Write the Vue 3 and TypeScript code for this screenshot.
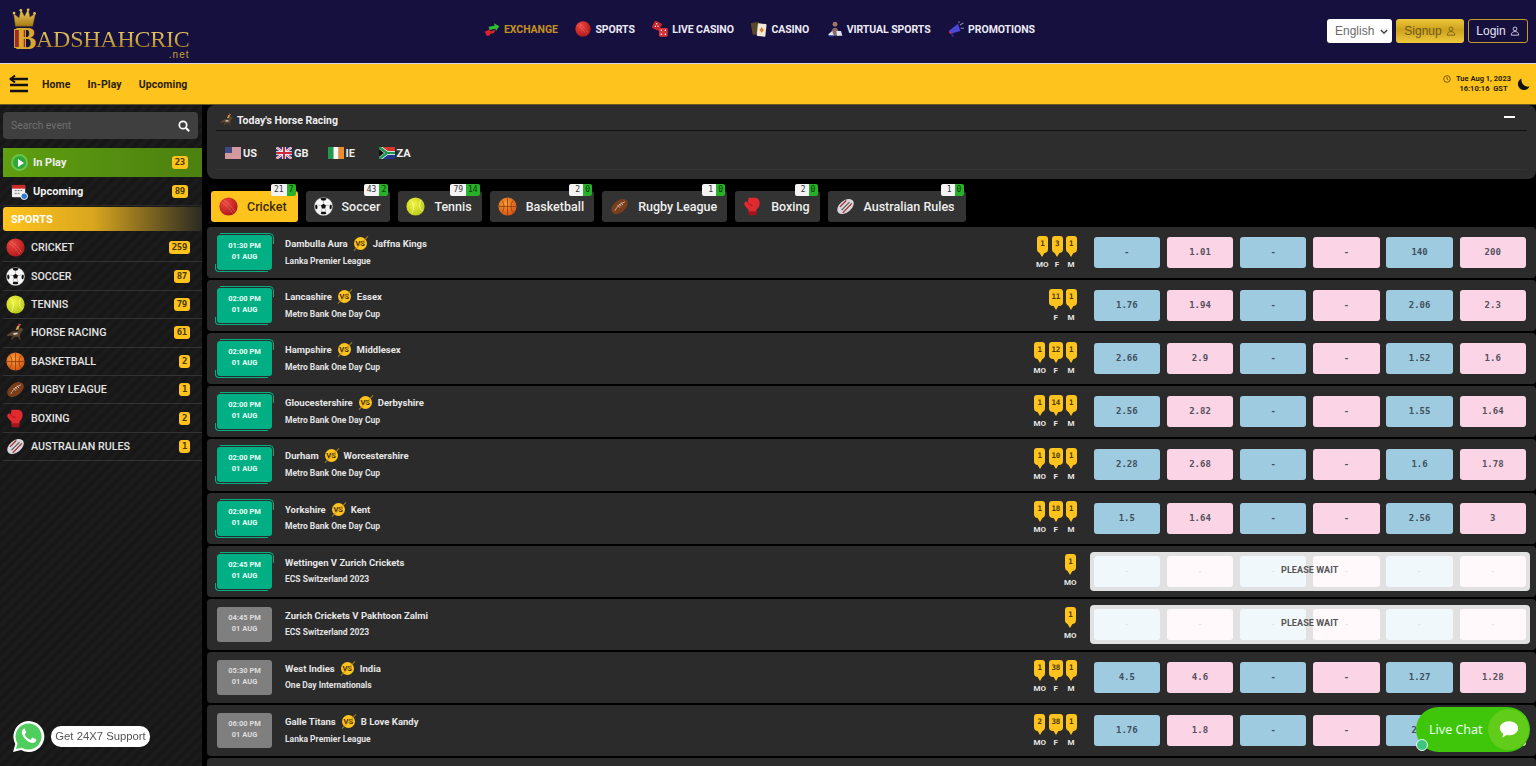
<script setup lang="ts">
type Pin = { n: number | string; l: string }
type Row = {
  time: string
  a: string
  b?: string
  league: string
  pins: Pin[]
  odds: string[]
  wait?: boolean
  gray?: boolean
}

const pins = (mo: number | null, f: number | null, m: number | null): Pin[] => {
  const out: Pin[] = []
  if (mo !== null) out.push({ n: mo, l: 'MO' })
  if (f !== null) out.push({ n: f, l: 'F' })
  if (m !== null) out.push({ n: m, l: 'M' })
  return out
}

const nav = [
  { icon: 'exchange', label: 'EXCHANGE', active: true },
  { icon: 'cricket', label: 'SPORTS' },
  { icon: 'dice', label: 'LIVE CASINO' },
  { icon: 'cards', label: 'CASINO' },
  { icon: 'virtual', label: 'VIRTUAL SPORTS' },
  { icon: 'promo', label: 'PROMOTIONS' }
]

const sports = [
  { icon: 'cricket', label: 'CRICKET', n: 259 },
  { icon: 'soccer', label: 'SOCCER', n: 87 },
  { icon: 'tennis', label: 'TENNIS', n: 79 },
  { icon: 'horse', label: 'HORSE RACING', n: 61 },
  { icon: 'basketball', label: 'BASKETBALL', n: 2 },
  { icon: 'rugby', label: 'RUGBY LEAGUE', n: 1 },
  { icon: 'boxing', label: 'BOXING', n: 2 },
  { icon: 'aussie', label: 'AUSTRALIAN RULES', n: 1 }
]

const tabs = [
  { icon: 'cricket', label: 'Cricket', a: 21, b: 7, active: true },
  { icon: 'soccer', label: 'Soccer', a: 43, b: 2 },
  { icon: 'tennis', label: 'Tennis', a: 79, b: 14 },
  { icon: 'basketball', label: 'Basketball', a: 2, b: 0 },
  { icon: 'rugby', label: 'Rugby League', a: 1, b: 0 },
  { icon: 'boxing', label: 'Boxing', a: 2, b: 0 },
  { icon: 'aussie', label: 'Australian Rules', a: 1, b: 0 }
]

const flags = [
  { id: 'flag-us', code: 'US' },
  { id: 'flag-gb', code: 'GB' },
  { id: 'flag-ie', code: 'IE' },
  { id: 'flag-za', code: 'ZA' }
]

const blank = ['-', '-', '-', '-', '-', '-']
const rows: Row[] = [
  { time: '01:30 PM', a: 'Dambulla Aura', b: 'Jaffna Kings', league: 'Lanka Premier League', pins: pins(1, 3, 1), odds: ['-', '1.01', '-', '-', '140', '200'] },
  { time: '02:00 PM', a: 'Lancashire', b: 'Essex', league: 'Metro Bank One Day Cup', pins: pins(null, 11, 1), odds: ['1.76', '1.94', '-', '-', '2.06', '2.3'] },
  { time: '02:00 PM', a: 'Hampshire', b: 'Middlesex', league: 'Metro Bank One Day Cup', pins: pins(1, 12, 1), odds: ['2.66', '2.9', '-', '-', '1.52', '1.6'] },
  { time: '02:00 PM', a: 'Gloucestershire', b: 'Derbyshire', league: 'Metro Bank One Day Cup', pins: pins(1, 14, 1), odds: ['2.56', '2.82', '-', '-', '1.55', '1.64'] },
  { time: '02:00 PM', a: 'Durham', b: 'Worcestershire', league: 'Metro Bank One Day Cup', pins: pins(1, 10, 1), odds: ['2.28', '2.68', '-', '-', '1.6', '1.78'] },
  { time: '02:00 PM', a: 'Yorkshire', b: 'Kent', league: 'Metro Bank One Day Cup', pins: pins(1, 18, 1), odds: ['1.5', '1.64', '-', '-', '2.56', '3'] },
  { time: '02:45 PM', a: 'Wettingen V Zurich Crickets', league: 'ECS Switzerland 2023', pins: pins(1, null, null), odds: blank, wait: true },
  { time: '04:45 PM', a: 'Zurich Crickets V Pakhtoon Zalmi', league: 'ECS Switzerland 2023', pins: pins(1, null, null), odds: blank, wait: true, gray: true },
  { time: '05:30 PM', a: 'West Indies', b: 'India', league: 'One Day Internationals', pins: pins(1, 38, 1), odds: ['4.5', '4.6', '-', '-', '1.27', '1.28'], gray: true },
  { time: '06:00 PM', a: 'Galle Titans', b: 'B Love Kandy', league: 'Lanka Premier League', pins: pins(2, 38, 1), odds: ['1.76', '1.8', '-', '-', '2.1', '2.2'], gray: true },
  { time: '', a: '', league: '', pins: [{ n: '', l: '' }], odds: [], gray: true }
]
</script>

<template>
  <div class="page">
    <svg class="defs" aria-hidden="true">
      <defs>
        <radialGradient id="g-red" cx="35%" cy="30%" r="80%"><stop offset="0" stop-color="#f0463f" /><stop offset="1" stop-color="#a81418" /></radialGradient>
        <radialGradient id="g-yel" cx="40%" cy="35%" r="75%"><stop offset="0" stop-color="#f2f53c" /><stop offset="1" stop-color="#b4c416" /></radialGradient>
        <radialGradient id="g-org" cx="40%" cy="35%" r="75%"><stop offset="0" stop-color="#f99a34" /><stop offset="1" stop-color="#cf4d10" /></radialGradient>
        <linearGradient id="g-gold" x1="0" y1="0" x2="0" y2="1"><stop offset="0" stop-color="#f5d468" /><stop offset="1" stop-color="#a77a14" /></linearGradient>
      </defs>
      <symbol id="i-cricket" viewBox="0 0 24 24">
        <circle cx="12" cy="12" r="11.500" fill="url(#g-red)" />
        <path d="M3.500 6.500C8 9 15 16 17.500 21M6 4c5 3 12 10 14 15" fill="none" stroke="#f08a80" stroke-width=".9" stroke-dasharray="1.400 .9" />
      </symbol>
      <symbol id="i-soccer" viewBox="0 0 24 24">
        <circle cx="12" cy="12" r="11.500" fill="#f7f7f7" stroke="#aaa" stroke-width=".5" />
        <path d="M12 8.500l3.200 2.300-1.200 3.700h-4l-1.200-3.700zM12 1c-1.500 0-2.900.3-4 .9L9.500 4 12 4.800 14.500 4 16 1.900A10 10 0 0012 1zM1.600 10.500c-.3 1.800 0 3.800 1 5.300L4.300 14.500V11.400L3 9.400zM22.400 10.500c.3 1.800 0 3.800-1 5.300l-1.700-1.300V11.400L21 9.400zM8.500 21l.8-2.400h5.400l.8 2.400c-2.200 1-4.800 1-7 0z" fill="#111" />
        <path d="M12 5v3.500M15.200 10.800L19.500 10M8.800 10.800L4.500 10M10 14.500l-1 4M14 14.500l1 4" stroke="#666" stroke-width=".5" />
      </symbol>
      <symbol id="i-tennis" viewBox="0 0 24 24">
        <circle cx="12" cy="12" r="11.500" fill="url(#g-yel)" />
        <path d="M5 3.500c5 3.500 6 11.500 2 17.500M19 3.500c-3 5-2.500 13 2.500 14" fill="none" stroke="#f7fad0" stroke-width=".9" />
      </symbol>
      <symbol id="i-horse" viewBox="0 0 24 24">
        <path d="M1 15l5-3c2-2 5-2 8-1l3-4 3-1 2 3-2 1-2 4-1 3 2 4-1 .5-3-4-4 0-4 3.500-.8-.7 2.800-4.300-3 0-4 .5z" fill="#5d4630" />
        <path d="M12 9l2-5 2.500-1.500L16 1l3 1-2 2-1 4z" fill="#cfa252" />
        <path d="M9 13l5-1 1 2-5 1z" fill="#d8d2c6" />
        <circle cx="16.500" cy="2.500" r="1.300" fill="#d33" />
      </symbol>
      <symbol id="i-basketball" viewBox="0 0 24 24">
        <circle cx="12" cy="12" r="11.500" fill="url(#g-org)" />
        <path d="M1 12h22M12 1v22M4.500 4c3.500 3 4.500 12 0 16M19.500 4c-3.500 3-4.500 12 0 16" fill="none" stroke="#7a2e08" stroke-width=".8" />
      </symbol>
      <symbol id="i-rugby" viewBox="0 0 24 24">
        <ellipse cx="12" cy="12" rx="12" ry="7.500" transform="rotate(-40 12 12)" fill="#7a3e1c" />
        <path d="M6 17.500C9 12 13 8 19 6" fill="none" stroke="#efe5d6" stroke-width=".8" />
        <path d="M9.500 10.500l3 3M11.500 8.800l3 3M13.800 7.200l2.600 3" stroke="#efe5d6" stroke-width=".9" />
      </symbol>
      <symbol id="i-boxing" viewBox="0 0 24 24">
        <path d="M7 1h8c4 0 6 3 6 7 0 4-2 6-4 8v3H7v-3L4 13c-2-2-3-4-2-6 1-1.500 3-1.500 4-.5z" fill="#e02a2f" />
        <rect x="7" y="18" width="10" height="5" rx="1" fill="#a5141a" />
        <path d="M6 6.500c1 3 3 4 6 4" fill="none" stroke="#8d1016" stroke-width="1" />
      </symbol>
      <symbol id="i-aussie" viewBox="0 0 24 24">
        <ellipse cx="12" cy="12" rx="12" ry="7.500" transform="rotate(-40 12 12)" fill="#d9d6dc" />
        <path d="M5 12.500L13 4.500M8.500 20L20 8" stroke="#a4282f" stroke-width="1.600" />
        <path d="M7 16.500L17 6.500" stroke="#555" stroke-width="1.400" />
      </symbol>
      <symbol id="i-exchange" viewBox="0 0 24 24">
        <path d="M7 8.500l9-1.500-1-3.500 8 4.500-5 6.500-1-3-9 2z" fill="#2fc02f" />
        <path d="M17 13l-8 2.500v-3L1 16l3.500 6.500 4.500-1v-2l6-1.500z" fill="#d4262b" />
      </symbol>
      <symbol id="i-dice" viewBox="0 0 24 24">
        <rect x="1.500" y="1" width="12" height="12" rx="2" transform="rotate(25 7 7)" fill="#c9242b" />
        <rect x="10.500" y="10.500" width="13" height="13" rx="2" fill="#d8333a" />
        <g fill="#fff"><circle cx="7" cy="4" r="1.100" /><circle cx="5" cy="8" r="1.100" /><circle cx="9" cy="8" r="1.100" /><circle cx="14" cy="14" r="1.100" /><circle cx="20" cy="14" r="1.100" /><circle cx="14" cy="20" r="1.100" /><circle cx="20" cy="20" r="1.100" /></g>
      </symbol>
      <symbol id="i-cards" viewBox="0 0 24 24">
        <rect x="1" y="2" width="12" height="18" rx="1.500" transform="rotate(-10 7 11)" fill="#5a4628" />
        <rect x="9.500" y="4" width="13" height="19" rx="1.500" transform="rotate(6 16 13)" fill="#efe9dc" />
        <path d="M16 9.500l3.200 4-3.200 4-3.200-4z" fill="#e07b1f" />
      </symbol>
      <symbol id="i-virtual" viewBox="0 0 24 24">
        <circle cx="12" cy="5" r="3.700" fill="#a07860" />
        <path d="M6 22c0-7 2-12 6-12s6 5 6 12z" fill="#8a6a66" />
        <path d="M2 20l6-5 2 7H3zM14 15h7l2 7h-8z" fill="#dfe3f2" />
        <path d="M3 22h7" stroke="#3c62d8" stroke-width="1.800" />
      </symbol>
      <symbol id="i-promo" viewBox="0 0 24 24">
        <path d="M1 15l14-11 3.500 11-14 4z" fill="#4b46d8" />
        <path d="M4.500 19l1.500 5h3l-1.500-6z" fill="#2d2a8a" />
        <path d="M2 16l3 3" stroke="#d02c50" stroke-width="2.400" />
        <path d="M18 6l5-3M19 11h5M16 3l1-2.500" stroke="#8a8a95" stroke-width="1.600" />
      </symbol>
      <symbol id="flag-us" viewBox="0 0 16 12">
        <rect width="16" height="12" fill="#eee" />
        <path d="M0 1h16M0 3h16M0 5h16M0 7h16M0 9h16M0 11h16" stroke="#b9454f" stroke-width="1" />
        <rect width="7" height="6" fill="#3c4a86" />
      </symbol>
      <symbol id="flag-gb" viewBox="0 0 16 12">
        <rect width="16" height="12" fill="#2c3a80" />
        <path d="M0 0l16 12M16 0L0 12" stroke="#fff" stroke-width="2.400" />
        <path d="M0 0l16 12M16 0L0 12" stroke="#d3283a" stroke-width=".8" />
        <path d="M8 0v12M0 6h16" stroke="#fff" stroke-width="3.600" />
        <path d="M8 0v12M0 6h16" stroke="#d3283a" stroke-width="2" />
      </symbol>
      <symbol id="flag-ie" viewBox="0 0 16 12">
        <rect width="5.400" height="12" fill="#1d9a4c" />
        <rect x="5.400" width="5.300" height="12" fill="#f7f7f7" />
        <rect x="10.700" width="5.300" height="12" fill="#f08a2c" />
      </symbol>
      <symbol id="flag-za" viewBox="0 0 16 12">
        <rect width="16" height="6" fill="#d8352c" />
        <rect y="6" width="16" height="6" fill="#24368c" />
        <path d="M0 0l8 6-8 6M8 6h8" stroke="#fff" stroke-width="4" fill="none" />
        <path d="M0 0l8 6-8 6M8 6h8" stroke="#1e9450" stroke-width="2.600" fill="none" />
        <path d="M0 2l5 4-5 4z" fill="#111" />
      </symbol>
    </svg>

    <header class="top">
      <div class="logo">
        <div class="logo-mark">
          <svg class="crown" viewBox="0 0 26 22">
            <path d="M3 20L1 6l6 5 2-9 4 7 4-8 2 9 6-4-3 14z" fill="url(#g-gold)" stroke="#7c5a12" stroke-width=".6" />
            <circle cx="9" cy="2.500" r="1.500" fill="#e9c04e" /><circle cx="17" cy="2" r="1.500" fill="#e9c04e" /><circle cx="1.500" cy="5.500" r="1.500" fill="#e9c04e" /><circle cx="24" cy="6" r="1.500" fill="#e9c04e" />
          </svg>
          <i class="logo-card"></i>
          <span class="logo-b">B</span>
        </div>
        <div class="logo-words">
          <span class="logo-name">ADSHAHCRIC</span>
          <span class="logo-net">.net</span>
        </div>
      </div>
      <nav class="nav">
        <a v-for="item in nav" :key="item.label" class="nav-item" :class="{ on: item.active }">
          <svg class="nav-ic"><use :href="'#i-' + item.icon" /></svg>
          <span>{{ item.label }}</span>
        </a>
      </nav>
      <div class="top-actions">
        <div class="lang">English
          <svg viewBox="0 0 10 6" class="lang-caret"><path d="M1 1l4 4 4-4" fill="none" stroke="#444" stroke-width="1.800" /></svg>
        </div>
        <button class="btn signup">Signup
          <svg class="user" viewBox="0 0 12 12"><circle cx="6" cy="3.500" r="2.300" /><path d="M1.500 11c0-3 2-4.300 4.500-4.300s4.500 1.300 4.500 4.300z" /></svg>
        </button>
        <button class="btn login">Login
          <svg class="user" viewBox="0 0 12 12"><circle cx="6" cy="3.500" r="2.300" /><path d="M1.500 11c0-3 2-4.300 4.500-4.300s4.500 1.300 4.500 4.300z" /></svg>
        </button>
      </div>
    </header>

    <div class="bar">
      <svg class="burger" viewBox="0 0 20 18">
        <path d="M1 4h18M1 10h18M1 16h18" stroke="#111" stroke-width="2.500" />
        <path d="M6 .5L1.500 4 6 7.500" fill="none" stroke="#111" stroke-width="2" />
      </svg>
      <a class="bar-link">Home</a>
      <a class="bar-link">In-Play</a>
      <a class="bar-link">Upcoming</a>
      <div class="clock">
        <svg class="clock-ic" viewBox="0 0 12 12"><circle cx="6" cy="6" r="5" fill="none" stroke="#3a2d00" /><path d="M6 3v3.200l2 1" fill="none" stroke="#3a2d00" /></svg>
        <div class="clock-text"><div>Tue Aug 1, 2023</div><div>16:10:16&nbsp; GST</div></div>
      </div>
      <svg class="moon" viewBox="0 0 14 14"><path d="M5 0.500a6.500 6.500 0 108.500 8.500C9 10.500 3.500 6 5 .5z" fill="#111" /></svg>
    </div>

    <div class="body">
      <aside class="side">
        <div class="search">
          <span>Search event</span>
          <svg viewBox="0 0 12 12" class="search-ic"><circle cx="5" cy="5" r="3.700" fill="none" stroke="#fff" stroke-width="1.700" /><path d="M8 8l3.200 3.200" stroke="#fff" stroke-width="2" /></svg>
        </div>
        <div class="quick live">
          <span class="play"><i></i></span>
          <span class="quick-label">In Play</span>
          <b class="count">23</b>
        </div>
        <div class="quick">
          <svg class="cal" viewBox="0 0 18 18">
            <rect x="1" y="2" width="14" height="13" rx="1" fill="#eee" />
            <rect x="1" y="2" width="14" height="4" fill="#c92a2a" />
            <path d="M4 8h2M7 8h2M10 8h2M4 11h2M7 11h2" stroke="#777" />
            <circle cx="14" cy="14" r="3.500" fill="#2d7dd2" stroke="#fff" />
          </svg>
          <span class="quick-label">Upcoming</span>
          <b class="count">89</b>
        </div>
        <div class="sports-head">SPORTS</div>
        <ul class="sports">
          <li v-for="s in sports" :key="s.label" class="sport">
            <svg class="sport-ic"><use :href="'#i-' + s.icon" /></svg>
            <span class="sport-label">{{ s.label }}</span>
            <b class="count">{{ s.n }}</b>
          </li>
        </ul>
      </aside>

      <main class="main">
        <section class="racing">
          <div class="racing-head">
            <svg class="racing-ic"><use href="#i-horse" /></svg>
            <span>Today's Horse Racing</span>
            <i class="minus"></i>
          </div>
          <div class="racing-flags">
            <div v-for="f in flags" :key="f.code" class="flag">
              <svg class="flag-ic"><use :href="'#' + f.id" /></svg>
              <span>{{ f.code }}</span>
            </div>
          </div>
        </section>

        <div class="tabs">
          <div v-for="t in tabs" :key="t.label" class="tab" :class="{ on: t.active }">
            <svg class="tab-ic"><use :href="'#i-' + t.icon" /></svg>
            <span>{{ t.label }}</span>
            <div class="tab-count"><span class="c-w">{{ t.a }}</span><span class="c-g">{{ t.b }}</span></div>
          </div>
        </div>

        <div class="rows">
          <article v-for="(r, i) in rows" :key="i" class="row">
            <div class="time" :class="{ gray: r.gray }">
              <template v-if="r.time">
                <span>{{ r.time }}</span>
                <span>01 AUG</span>
              </template>
            </div>
            <div class="info">
              <div class="teams">
                <span>{{ r.a }}</span>
                <template v-if="r.b">
                  <span class="vs">VS</span>
                  <span>{{ r.b }}</span>
                </template>
              </div>
              <div class="league">{{ r.league }}</div>
            </div>
            <div class="pins">
              <div v-for="p in r.pins" :key="p.l" class="pin-col">
                <span class="pin">{{ p.n }}</span>
                <span class="pin-label">{{ p.l }}</span>
              </div>
            </div>
            <div class="odds">
              <div v-for="(o, j) in r.odds" :key="j" class="odd" :class="j % 2 ? 'lay' : 'back'">{{ o }}</div>
              <div v-if="r.wait" class="wait">PLEASE WAIT</div>
            </div>
          </article>
        </div>
      </main>
    </div>

    <div class="wa">
      <svg class="wa-ic" viewBox="0 0 32 32">
        <path d="M1 31l2.200-7.800A15 15 0 1116 31a15 15 0 01-7.200-1.800z" fill="#fff" />
        <path d="M3.800 28.200l1.600-5.400A12.600 12.600 0 1116 28.600a12.600 12.600 0 01-6.500-1.800z" fill="#4fce5d" />
        <path d="M11.500 8.500c-1 .4-2.200 2-2 3.800.4 3.600 5.400 9.500 10.200 10 1.800.2 3.300-1 3.800-2.200.2-.8.100-1.300-.2-1.500l-3-1.500c-.5-.2-.8 0-1.100.4l-1 1.300c-.3.300-.6.300-1 .1-2-.9-3.600-2.400-4.700-4.400-.2-.4-.1-.7.200-1l.8-1c.2-.3.2-.6.100-.9l-1.200-3c-.2-.5-.5-.6-.9-.1z" fill="#fff" />
      </svg>
      <span class="wa-text">Get 24X7 Support</span>
    </div>

    <div class="chat">
      <span class="chat-text">Live Chat</span>
      <span class="chat-circle">
        <svg viewBox="0 0 24 22" class="chat-ic"><path d="M12 1c6 0 11 3.500 11 8.500S18 18 12 18c-1 0-2-.1-3-.3L4 21l1-5c-2.500-1.500-4-3.800-4-6.500C1 4.500 6 1 12 1z" fill="#fff" /></svg>
      </span>
      <i class="chat-dot"></i>
    </div>
  </div>
</template>

<style>
html, body { margin: 0; background: #000; }
</style>

<style scoped>
.page { height: 766px; overflow: hidden; background: #000; font-family: Roboto, "Noto Sans", sans-serif; color: #eee; }
.defs { position: absolute; width: 0; height: 0; }

.top { height: 63px; background: #16103f; border-bottom: 1px solid #d8d6e4; display: flex; align-items: flex-start; box-sizing: content-box; position: relative; }
.logo { display: flex; width: 190px; height: 63px; padding: 8px 0 0 12px; box-sizing: border-box; color: #d9ab2e; font-family: "Liberation Serif", serif; flex: none; }
.logo-mark { position: relative; width: 25px; display: flex; flex-direction: column; align-items: center; }
.crown { width: 25px; height: 20px; flex: none; }
.logo-card { position: absolute; left: 2px; top: 21px; width: 12px; height: 19px; background: #a3262a; border: 1px solid #c9a03c; box-sizing: border-box; }
.logo-b { position: relative; font-size: 31px; line-height: 22px; font-weight: 700; color: #d8a92c; margin-left: 3px; }
.logo-words { display: flex; flex-direction: column; margin-top: 20px; margin-left: -1px; }
.logo-name { font-size: 24px; line-height: 22px; letter-spacing: -.25px; background: linear-gradient(#f4d774, #a97d18); -webkit-background-clip: text; background-clip: text; color: transparent; white-space: nowrap; }
.logo-net { font-size: 10px; line-height: 10px; text-align: right; letter-spacing: 1px; color: #c9a03c; font-family: "Liberation Sans", sans-serif; }

.nav { display: flex; align-items: center; margin-left: 294px; margin-top: 21px; height: 16px; }
.nav-item { display: flex; align-items: center; gap: 4px; font-size: 10.5px; font-weight: 700; color: #eceaf5; margin-right: 17.500px; white-space: nowrap; letter-spacing: -.06px; }
.nav-item.on { color: #c3921f; }
.nav-ic { width: 16px; height: 16px; flex: none; }

.top-actions { display: flex; gap: 4px; margin-left: auto; margin-right: 8px; margin-top: 19px; height: 24px; font-family: "Liberation Sans", sans-serif; font-size: 12px; }
.lang { width: 65px; background: #fff; border-radius: 3px; color: #6b6b6b; display: flex; align-items: center; padding-left: 8px; box-sizing: border-box; position: relative; }
.lang-caret { width: 8px; height: 5px; position: absolute; right: 4px; top: 10px; }
.btn { display: flex; align-items: center; justify-content: center; gap: 4px; padding: 0; border-radius: 3px; font: inherit; height: 24px; box-sizing: border-box; }
.signup { width: 68px; border: 0; background: linear-gradient(#eec63a, #cda21c 45%, #efc83c); color: #6e5a1c; }
.login { width: 60px; border: 1px solid #c79a2c; background: transparent; color: #e7e3f2; }
.user { width: 10px; height: 10px; fill: none; stroke: currentColor; stroke-width: 1; }

.bar { height: 40px; background: #ffc31e; border-bottom: 1px solid #6e5a20; display: flex; align-items: center; color: #2a2200; }
.burger { width: 20px; height: 18px; margin-left: 9px; margin-right: 13px; flex: none; }
.bar-link { font-size: 10.5px; font-weight: 700; margin-right: 17px; letter-spacing: .1px; }
.clock { margin-left: auto; display: flex; align-items: flex-start; gap: 5px; font-size: 7.5px; font-weight: 700; line-height: 10px; text-align: center; }
.clock-ic { width: 8px; height: 8px; margin-top: 1px; }
.moon { width: 13px; height: 13px; margin: 0 6px 0 6px; }

.body { display: flex; height: 661px; }
.side { width: 202px; flex: none; background: repeating-linear-gradient(-45deg, #1b1b1b 0 4px, #171717 4px 8px); padding-top: 7px; box-sizing: border-box; }
.search { margin: 0 4px 0 3px; height: 27px; background: #3f3f3f; border-radius: 4px; display: flex; align-items: center; justify-content: space-between; padding: 0 8px 0 8px; font-size: 10.5px; color: #6f6f6f; }
.search-ic { width: 12px; height: 12px; }
.quick { margin-left: 3px; height: 29px; display: flex; align-items: center; padding-right: 14px; font-size: 11px; font-weight: 700; border-bottom: 1px solid #2b2b2b; box-sizing: border-box; }
.quick.live { margin-top: 9px; background: linear-gradient(90deg, #5f9f10, #4c8010); border-bottom: 0; }
.play { width: 17px; height: 17px; box-sizing: border-box; border-radius: 50%; background: #2fa83a; border: 2px solid #6cc44a; margin-left: 8px; margin-right: 5px; display: flex; align-items: center; justify-content: center; }
.play i { width: 0; height: 0; border-left: 6px solid #fff; border-top: 4px solid transparent; border-bottom: 4px solid transparent; margin-left: 2px; }
.cal { width: 17px; height: 17px; margin-left: 8px; margin-right: 5px; flex: none; }
.quick-label { flex: 1; }
.count { background: #ffc31e; color: #4a3a05; font-size: 9px; font-weight: 700; border-radius: 3px; padding: 0 3px; height: 13px; line-height: 13px; min-width: 5px; text-align: center; font-family: "DejaVu Sans Mono", monospace; letter-spacing: -.3px; }
.sports-head { margin: 1px 0 3px 3px; height: 24px; line-height: 25px; padding-left: 8px; border-radius: 3px 0 0 3px; background: linear-gradient(90deg, #ffc31e 0, #d9a61e 45%, #2a2a22 100%); font-size: 11px; font-weight: 700; color: #fff; }
.sports { list-style: none; margin: 0; padding: 0; }
.sport { margin-left: 3px; height: 28.400px; box-sizing: border-box; border-bottom: 1px solid #333; display: flex; align-items: center; padding-right: 12px; }
.sport-ic { width: 19px; height: 19px; margin-left: 3px; margin-right: 6px; flex: none; }
.sport-label { flex: 1; font-size: 10.700px; font-weight: 500; color: #e4e4e4; }

.main { flex: 1; margin-left: 5px; min-width: 0; display: flex; flex-direction: column; }
.racing { height: 74px; background: #2d2d2d; border-radius: 8px; padding: 5px 9px 0; box-sizing: border-box; flex: none; }
.racing-head { height: 20px; border-bottom: 1px solid #111; display: flex; align-items: center; padding-left: 4px; font-size: 10.500px; font-weight: 700; }
.racing-ic { width: 14px; height: 14px; margin-right: 3px; flex: none; }
.minus { margin-left: auto; margin-right: 12px; width: 11px; height: 2px; background: #fff; margin-top: -6px; }
.racing-flags { display: flex; height: 39px; box-sizing: border-box; padding-top: 6px; align-items: center; border-bottom: 1px solid #343434; padding-left: 9px; gap: 19px; font-size: 11px; font-weight: 700; }
.flag { display: flex; align-items: center; gap: 2px; min-width: 32px; }
.flag-ic { width: 16px; height: 12px; }

.tabs { display: flex; gap: 8px; margin: 12px 0 5px 4px; flex: none; }
.tab { position: relative; height: 31px; background: #333; border-radius: 3px; display: flex; align-items: center; padding: 0 10px 0 8px; font-size: 12.500px; font-weight: 500; color: #eee; gap: 9px; }
.tab:first-child, .tab:last-child { padding-right: 11px; }
.tab.on { background: #ffc31e; color: #3a2d00; }
.tab-ic { width: 19px; height: 19px; flex: none; }
.tab-count { position: absolute; right: 2px; top: -7px; height: 12px; display: flex; font-size: 8px; line-height: 12px; font-family: "DejaVu Sans Mono", monospace; color: #333; border-radius: 2px; overflow: hidden; }
.c-w { background: #f4f4f4; padding: 0 3px; min-width: 8px; text-align: right; }
.c-g { background: #28b028; padding: 0 2px; color: #0b3a0b; min-width: 5px; text-align: center; }

.rows { display: flex; flex-direction: column; gap: 2px; flex: none; }
.row { height: 51.110px; flex: none; background: #2b2b2b; border-radius: 4px; display: flex; align-items: center; padding-right: 10px; box-sizing: border-box; }
.time { position: relative; width: 55px; height: 35px; padding-bottom: 2px; box-sizing: border-box; margin-left: 10px; margin-right: 13px; background: #00b084; border-radius: 3px; flex: none; display: flex; flex-direction: column; align-items: center; justify-content: center; gap: 3px; font-size: 7.500px; line-height: 8px; font-weight: 700; color: #eafff8; }
.time::before { content: ""; position: absolute; top: -2px; right: -2px; left: 3px; height: 10px; border-top: 1px solid #00b084; border-right: 1px solid #00b084; border-top-right-radius: 5px; }
.time::after { content: ""; position: absolute; bottom: -2px; left: -2px; right: 4px; height: 7px; border-bottom: 1px solid #00b084; border-left: 1px solid #00b084; border-bottom-left-radius: 4px; }
.time.gray { background: #7f7f7f; color: #ddd; }
.time.gray::before, .time.gray::after { display: none; }
.info { flex: 1; min-width: 0; display: flex; flex-direction: column; gap: 4px; margin-bottom: 2px; }
.teams { display: flex; align-items: center; height: 14px; gap: 5px; font-size: 9.500px; font-weight: 700; color: #e6e6e6; white-space: nowrap; }
.league { font-size: 8.500px; font-weight: 700; line-height: 12px; color: #e2e2e2; white-space: nowrap; }
.vs { position: relative; width: 13px; height: 13px; border-radius: 50%; background: #ffc31e; color: #3a2d00; font-size: 7.500px; line-height: 13px; text-align: center; flex: none; margin: 0 1px; }
.vs::after { content: ""; position: absolute; left: -3px; right: -4px; top: 6px; height: 1px; background: #c3921f; transform: rotate(-45deg); opacity: .8; }
.pins { display: flex; gap: 3px; margin-right: 17px; margin-top: -1px; flex: none; }
.pin-col { display: flex; flex-direction: column; align-items: center; min-width: 11px; }
.pin { position: relative; min-width: 11px; height: 17px; padding: 0 2.500px; box-sizing: border-box; background: #ffc31e; border-radius: 3px 3px 4px 4px; color: #4a3a05; font-size: 7.500px; line-height: 16px; text-align: center; font-family: "DejaVu Sans Mono", monospace; font-weight: 700; letter-spacing: -.2px; }
.pin::after { content: ""; position: absolute; left: 50%; bottom: -4px; margin-left: -3px; border-left: 3px solid transparent; border-right: 3px solid transparent; border-top: 5px solid #ffc31e; }
.pin-label { margin-top: 7px; font-size: 8px; line-height: 9px; font-weight: 700; color: #e6e6e6; }
.odds { position: relative; display: grid; grid-template-columns: repeat(6, 66.500px); column-gap: 6.700px; flex: none; }
.odd { height: 31px; border-radius: 3px; text-align: center; line-height: 31px; font-family: "DejaVu Sans Mono", monospace; font-size: 9px; font-weight: 700; color: #3f5060; }
.back { background: #9ecbdf; }
.lay { background: #fbd5e5; color: #55505f; }
.wait { position: absolute; inset: -4px -4px -4px -4px; background: rgba(255, 255, 255, .86); border-radius: 4px; text-align: center; line-height: 37px; font-size: 9px; font-weight: 700; color: #555; letter-spacing: .1px; }

.wa { position: fixed; left: 12px; top: 720px; display: flex; align-items: center; gap: 6px; }
.wa-ic { width: 33px; height: 33px; }
.wa-text { height: 21px; line-height: 21px; width: 99px; box-sizing: border-box; text-align: center; background: #fff; border-radius: 10px; color: #555; font-family: "Liberation Sans", sans-serif; font-size: 11.300px; white-space: nowrap; }

.chat { position: fixed; left: 1416px; top: 707px; width: 114px; height: 45px; border-radius: 23px; background: #3fc60a; display: flex; align-items: center; justify-content: space-between; }
.chat-text { margin-left: 13px; font-size: 12.500px; color: #eafff0; font-family: "Noto Sans", sans-serif; }
.chat-circle { width: 41px; height: 41px; border-radius: 50%; background: #62cc1a; margin-right: 1px; display: flex; align-items: center; justify-content: center; }
.chat-ic { width: 20px; height: 19px; }
.chat-dot { position: absolute; left: 0; top: 32px; width: 10px; height: 10px; border-radius: 50%; background: #3fc380; border: 1.500px solid #e8fff0; }
</style>
